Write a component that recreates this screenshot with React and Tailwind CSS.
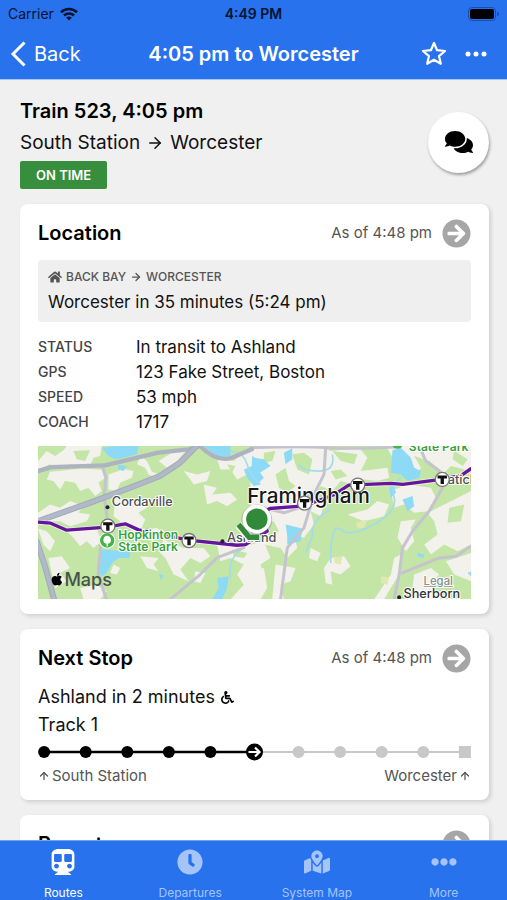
import React from "react";
import {
  FaEllipsisH,
  FaComments,
  FaHome,
  FaArrowCircleRight,
  FaWheelchair,
  FaSubway,
  FaClock,
  FaMapMarkedAlt,
  FaApple,
} from "react-icons/fa";
import { ArrowRight, ArrowUp } from "lucide-react";

function StatusBar() {
  return (
    <div className="grid h-7 grid-cols-3 items-center px-2 text-sm leading-4 text-[#071330]">
      <div className="flex items-center gap-1.5">
        <span>Carrier</span>
        <svg width="18" height="14" viewBox="0 0 18 14" fill="none" stroke="currentColor" strokeWidth="2.600" aria-hidden="true">
          <path d="M1 5.200a11.500 11.500 0 0 1 16 0M4 8.500a7.200 7.200 0 0 1 10 0" />
          <path d="M9 13.500 6.200 10.800a4 4 0 0 1 5.600 0z" fill="currentColor" stroke="none" />
        </svg>
      </div>
      <div className="text-center font-semibold">4:49 PM</div>
      <div className="flex items-center justify-end gap-px">
        <span className="flex h-3.5 w-7 rounded-sm border border-[#1b4fae] p-px">
          <span className="flex-1 rounded-xs bg-black" />
        </span>
        <span className="h-1 w-0.5 rounded-r bg-[#1b4fae]" />
      </div>
    </div>
  );
}

function NavBar() {
  return (
    <nav className="grid h-[52px] grid-cols-[1fr_auto_1fr] items-center border-b border-[#a9c6fa] px-2.5 text-white">
      <button type="button" className="flex items-center gap-2 text-xl">
        <svg width="16" height="26" viewBox="0 0 16 26" fill="none" stroke="currentColor" strokeWidth="3" aria-hidden="true">
          <path d="M14.500 1.500 3 13l11.500 11.500" />
        </svg>
        Back
      </button>
      <h1 className="text-xl font-semibold">4:05 pm to Worcester</h1>
      <div className="flex items-center justify-end gap-[18px] pr-2.5">
        <button type="button" aria-label="Favorite">
          <svg width="26" height="26" viewBox="0 0 26 26" fill="none" stroke="currentColor" strokeWidth="2.200" strokeLinejoin="round" aria-hidden="true">
            <path d="M13 2l3.100 7.200 7.900.8-6 5.100 1.800 7.700-6.800-4-6.800 4L8 15.100 2 10l7.900-.8z" />
          </svg>
        </button>
        <button type="button" aria-label="More options">
          <svg width="22" height="6" viewBox="0 0 22 6" fill="currentColor" aria-hidden="true">
            <circle cx="3" cy="3" r="2.500" />
            <circle cx="11" cy="3" r="2.500" />
            <circle cx="19" cy="3" r="2.500" />
          </svg>
        </button>
      </div>
    </nav>
  );
}

function Card({ title, asOf, children }) {
  return (
    <section className="rounded-lg bg-white px-[18px] pt-[15px] pb-[15px] shadow-[2px_2px_4px_rgba(0,0,0,0.14)]">
      <header className="flex h-7 items-center justify-between">
        <h2 className="text-xl font-semibold text-black">{title}</h2>
        <div className="flex items-center gap-2.5 text-[15px] text-[#555]">
          {asOf && <span>{asOf}</span>}
          <button type="button" aria-label={`Open ${title}`} className="text-[#a6a6a6]">
            <FaArrowCircleRight size={29} />
          </button>
        </div>
      </header>
      {children}
    </section>
  );
}

const LAND = [
  "24,60 50,30 75,45 100,28 110,15 215,15 210,45 190,50 180,75 120,70 80,85 60,70 24,85",
  "60,92 100,88 150,82 215,86 225,110 205,125 215,150 195,165 175,140 150,150 135,125 105,120 90,145 70,120 50,115",
  "235,100 280,84 310,90 305,110 270,125 260,150 235,145",
  "330,45 350,60 365,92 400,105 385,112 355,100 345,80 320,70",
  "385,60 425,35 470,25 440,60 410,80",
  "24,215 60,190 90,200 120,180 160,195 145,215 180,220 170,240 120,255 90,240 24,240",
  "110,270 200,265 215,300 190,320 170,300 150,315 130,290",
  "24,262 50,270 75,300 60,330 40,310",
  "55,350 95,345 120,380 90,395 110,420 75,440",
  "255,170 300,180 330,170 350,200 325,215 345,235 330,270 380,260 400,280 370,300 330,290 290,255 250,225",
  "460,90 500,100 540,90 530,120 490,130 480,115",
  "520,130 560,140 545,160 600,155 620,175 590,195 560,180 530,190",
  "560,55 610,60 640,35 690,30 690,115 650,100 620,115 600,85 570,85",
  "400,295 460,320 520,320 540,345 510,365 480,350 450,385 475,420 430,400 405,350 385,330",
  "495,390 525,395 510,425 490,420",
  "560,310 640,315 700,300 720,350 690,370 700,400 680,430 665,474 600,474 640,430 620,400 640,370 600,350 570,360",
  "330,345 385,350 370,370 385,390 350,380",
  "250,370 270,380 260,400 240,395",
  "150,440 200,430 230,450 210,474 160,474",
  "660,15 870,15 900,30 985,20 1010,50 990,90 1070,80 1075,110 1040,120 1000,115 970,130 930,120 905,150 870,135 850,165 880,190 870,225 840,210 850,250 820,290 790,280 800,320 770,350 750,320 700,310 680,270 660,260",
  "1065,15 1320,15 1320,90 1260,75 1240,95 1195,60 1150,45 1170,80 1150,110 1110,90",
  "1080,150 1130,130 1200,140 1215,170 1190,210 1150,215 1120,190 1090,200",
  "1190,215 1240,190 1320,150 1320,310 1280,330 1240,310 1200,340 1180,310 1220,280 1210,240",
  "1110,240 1155,235 1140,260 1150,300 1125,330 1100,290",
  "950,220 1010,205 1040,180 1075,190 1060,225 1000,240",
  "840,320 870,335 860,360 835,350",
  "900,350 940,345 960,375 930,400 900,390 905,430 885,425 880,380",
  "735,370 795,380 780,420 750,430 760,474 725,474",
  "660,390 700,380 710,440 690,474 660,474",
  "1090,350 1110,340 1105,400 1080,440 1060,474 1030,474 1080,400",
  "1150,400 1200,380 1225,400 1200,425 1230,474 1140,474",
  "1245,360 1320,335 1320,420 1270,400",
];

const GREENS = [
  "735,100 765,80 775,120 795,135 770,155 745,140",
  "785,40 820,35 845,55 835,100 800,85",
  "700,35 735,30 725,60 700,65",
  "905,30 980,40 970,70 930,60",
  "900,90 930,85 950,105 915,115",
  "690,245 730,240 745,270 715,285",
  "1200,75 1230,90 1215,105",
  "1270,30 1310,55 1295,75 1265,55",
  "1255,200 1300,190 1290,240 1250,245",
  "605,325 650,335 640,350 610,345",
  "130,30 180,28 165,60 140,55",
  "590,70 615,75 605,95",
];

const WATER = [
  "215,20 255,15 325,15 320,40 280,50 255,55 235,45",
  "520,15 600,15 600,45 570,48 545,35",
  "262,72 290,75 280,90 265,85",
  "215,325 300,330 298,350 265,350 245,365 230,395 215,405 200,385 205,350",
  "560,410 595,405 590,440 575,474 545,474 565,440",
  "640,85 665,75 680,100 720,75 700,55 670,50 665,110 690,130 670,135 650,110",
  "665,45 690,60 685,90 700,110 680,130 662,110",
  "765,250 815,262 810,300 770,310 770,285",
  "760,35 785,22 785,55 765,70",
  "825,165 845,145 850,185 835,205",
  "1085,28 1110,20 1140,50 1150,80 1170,90 1165,110 1130,120 1110,100 1080,95",
  "1115,175 1145,165 1150,195 1130,210",
  "1075,140 1090,130 1095,155 1080,170",
  "1160,335 1180,340 1178,350 1160,345",
  "385,398 400,402 392,415",
  "1310,395 1320,390 1320,405",
];

const HAZE = [
  "975,245 1010,235 1000,260 980,262",
  "1050,405 1075,408 1070,430 1050,425",
  "910,350 935,345 930,370 912,365",
];

const SHAPES = (list, fill) => list.map((points) => <polygon key={points} points={points} fill={fill} />);

const STATIONS = [
  [233, 255],
  [476, 298],
  [822, 186],
  [981, 132],
  [1234, 115],
];

function RouteMap() {
  const halo = { stroke: "#fff", strokeWidth: 6, strokeLinejoin: "round", paintOrder: "stroke" };
  return (
    <svg viewBox="24 15 1296 459" className="mt-3 block h-auto w-full" role="img" aria-label="Train location map">
      <rect x="24" y="15" width="1296" height="459" fill="#c3e5a5" />
      {SHAPES(LAND, "#f3f1eb")}
      {SHAPES(GREENS, "#c3e5a5")}
      {SHAPES(HAZE, "#dde9ad")}
      {SHAPES(WATER, "#8ddaf6")}
      <g fill="none" stroke="#a2dcec" strokeWidth="5">
        <path d="M600 30q40 5 50 40t40 60M1110 110q-30 20-20 60t-60 80-100 15-30 100M905 40q10 50-40 50t-60-20M900 205q-60 30-55 80l-20 50M640 320q-50 30-40 90" />
      </g>
      <g fill="none" strokeLinejoin="round" strokeLinecap="round">
        <g stroke="#c4c3ce" strokeWidth="9">
          <path d="M215 70l12 40-5 60 12 80-22 60-8 90 25 74" />
          <path d="M885 20l-5 80-30 60-30 100-50 60-20 154" />
          <path d="M420 474l90-75 50-50 80-30" />
          <path d="M660 20q160-5 230 0t200-2" />
          <path d="M1165 15l20 45 40 30 10 50-40 70-50 60-30 50-10 80-15 74M1115 395l110-45 50-5 45-30M700 200l60 15 60-20 30-30" />
        </g>
        <path d="M24 90l40-12 160-5 160-38 90-10 35-10q50 50 95 35l60-25" stroke="#aeb3c0" strokeWidth="13" />
        <path d="M24 240l155-55 120-45 90-35 60-40 55-55M20 300l25 75 30 110" stroke="#a2abb9" strokeWidth="18" />
        <path d="M24 240l155-55 120-45 90-35 60-40 55-55M20 300l25 75 30 110" stroke="#b1b8c7" strokeWidth="12" />
        <path
          d="M24 243l38 3 48 21 120-9 55-10 40 18 150 31 145 15 25-2 65-40-22-50 30-18 104-8 90-34 42-28 127-5 35 3 115-15 60-12 29-20"
          stroke="#fff"
          strokeOpacity="0.600"
          strokeWidth="15"
        />
        <path
          d="M24 243l38 3 48 21 120-9 55-10 40 18 150 31 145 15 25-2 65-40-22-50 30-18 104-8 90-34 42-28 127-5 35 3 115-15 60-12 29-20"
          stroke="#65169b"
          strokeWidth="10"
        />
      </g>
      <g className="font-medium" fill="#4d4f51" style={halo}>
        <text x="245" y="196" fontSize="38">Cordaville</text>
        <text x="590" y="301" fontSize="38">Ashland</text>
        <text x="1222" y="130" fontSize="38">Natick</text>
        <text x="1118" y="470" fontSize="38" fill="#303234">Sherborn</text>
        <g fill="#35a23a" className="font-semibold">
          <text x="264" y="292" fontSize="36">Hopkinton</text>
          <text x="264" y="328" fontSize="36">State Park</text>
          <text x="1134" y="29" fontSize="36">State Park</text>
        </g>
        <text x="650" y="186" fontSize="62" fill="#17191b">Framingham</text>
        <text x="1178" y="430" fontSize="34" fill="#87908a" textDecoration="underline">Legal</text>
      </g>
      <g fill="#222">
        <circle cx="232" cy="198" r="6" />
        <circle cx="576" cy="300" r="6" />
        <circle cx="1105" cy="468" r="6" />
      </g>
      <circle cx="231" cy="298" r="23" fill="#43b649" stroke="#fff" strokeWidth="3" />
      <path d="M231 284a12 12 0 0 1 4 23h-2v9h-4v-9h-2a12 12 0 0 1 4-23z" fill="#fff" />
      <ellipse cx="1100" cy="16" rx="13" ry="7" fill="#43b649" />
      {STATIONS.map(([x, y]) => (
        <g key={x} transform={`translate(${x} ${y})`}>
          <circle r="21" fill="#fff" stroke="#777" strokeWidth="4" />
          <path d="M-14-12h28v9H5v17h-10v-17h-9z" fill="#111" />
        </g>
      ))}
      <path d="M624 250l32 38h32" fill="none" stroke="#fff" strokeWidth="24" />
      <path d="M624 250l32 38h30" fill="none" stroke="#32893a" strokeWidth="16" />
      <circle cx="679" cy="236" r="46" fill="#5c6b5c" opacity="0.350" />
      <circle cx="679" cy="234" r="43" fill="#fff" />
      <circle cx="679" cy="234" r="32" fill="#31893a" />
      <g fill="#47534b">
        <g transform="translate(59 392)">
          <FaApple size={43} />
        </g>
        <text x="103" y="434" fontSize="54" className="font-medium">Maps</text>
      </g>
    </svg>
  );
}

const DETAILS = [
  ["STATUS", "In transit to Ashland"],
  ["GPS", "123 Fake Street, Boston"],
  ["SPEED", "53 mph"],
  ["COACH", "1717"],
];

function LocationCard() {
  return (
    <Card title="Location" asOf="As of 4:48 pm">
      <div className="mt-[13px] h-[62px] rounded bg-[#efefef] px-2.5 pt-2">
        <p className="flex items-center gap-1 text-xs leading-[18px] font-medium text-[#555]">
          <FaHome size={14} />
          BACK BAY
          <ArrowRight size={12} strokeWidth={2.5} />
          WORCESTER
        </p>
        <p className="mt-1 text-[17px] leading-6 text-[#111]">Worcester in 35 minutes (5:24 pm)</p>
      </div>
      <dl className="mt-[13px] grid grid-cols-[98px_1fr] gap-y-px text-[#111]">
        {DETAILS.map(([label, value]) => (
          <React.Fragment key={label}>
            <dt className="text-sm leading-6 font-medium text-[#444]">{label}</dt>
            <dd className="text-[17px] leading-6">{value}</dd>
          </React.Fragment>
        ))}
      </dl>
      <RouteMap />
    </Card>
  );
}

const STOPS = [0, 1, 2, 3, 4, 5, 6, 7, 8, 9, 10];
const CURRENT = 5;

function stopX(i) {
  return i < CURRENT ? 6 + i * 41.5 : i === CURRENT ? 216 : 260 + (i - 6) * 41.5;
}

function Progress() {
  return (
    <svg viewBox="0 0 432 18" className="mt-1 block h-auto w-full" role="img" aria-label="Stop 6 of 11">
      <path d="M6 9h210" stroke="#000" strokeWidth="2.500" />
      <path d="M216 9h210" stroke="#c8c8c8" strokeWidth="2" />
      {STOPS.map((i) =>
        i === 10 ? (
          <rect key={i} x="420" y="3" width="12" height="12" fill="#c8c8c8" />
        ) : (
          <circle key={i} cx={stopX(i)} cy="9" r={i === CURRENT ? 8.5 : 6} fill={i <= CURRENT ? "#000" : "#c8c8c8"} />
        )
      )}
      <path d="M210 9h11M216.500 4.500 221 9l-4.500 4.500" fill="none" stroke="#fff" strokeWidth="2.200" />
    </svg>
  );
}

function NextStopCard() {
  return (
    <Card title="Next Stop" asOf="As of 4:48 pm">
      <div className="mt-[11px] text-lg leading-7 text-[#111]">
        <p className="flex items-center gap-1.5">
          Ashland in 2 minutes <FaWheelchair size={13} className="text-black" />
        </p>
        <p>Track 1</p>
      </div>
      <Progress />
      <div className="mt-1.5 flex justify-between text-[15px] leading-[18px] text-[#555]">
        <span className="flex items-center gap-0.5">
          <ArrowUp size={12} strokeWidth={2.5} />
          South Station
        </span>
        <span className="flex items-center gap-0.5">
          Worcester
          <ArrowUp size={12} strokeWidth={2.5} />
        </span>
      </div>
    </Card>
  );
}

const TABS = [
  ["Routes", FaSubway],
  ["Departures", FaClock],
  ["System Map", FaMapMarkedAlt],
  ["More", FaEllipsisH],
];

function TabBar() {
  return (
    <nav className="grid h-[60px] shrink-0 grid-cols-4 border-t border-[#6ea0f5] bg-[#2872ee]">
      {TABS.map(([label, Icon], i) => (
        <button
          key={label}
          type="button"
          className={`flex flex-col items-center justify-start gap-2.5 pt-2 text-xs leading-4 ${i === 0 ? "text-white" : "text-[#a5c4fa]"}`}
        >
          <Icon size={26} className="shrink-0" />
          {label}
        </button>
      ))}
    </nav>
  );
}

export default function App() {
  return (
    <div className="flex h-screen flex-col overflow-hidden bg-[#f0f0f0] font-['Inter',sans-serif]">
      <div className="shrink-0 bg-[#2872ee]">
        <StatusBar />
        <NavBar />
      </div>
      <main className="min-h-0 flex-1 overflow-y-auto pt-[15px] pr-[18px] pl-5 [scrollbar-width:none]">
        <div className="flex items-center justify-between">
          <div>
            <h2 className="text-xl leading-8 font-semibold text-black">Train 523, 4:05 pm</h2>
            <p className="flex items-center gap-1.5 text-[19px] leading-8 text-[#111]">
              South Station
              <ArrowRight size={18} strokeWidth={2} />
              Worcester
            </p>
            <span className="mt-0.5 block w-fit rounded-xs bg-[#378e3c] px-4 text-[13px] leading-7 font-semibold text-white">
              ON TIME
            </span>
          </div>
          <button
            type="button"
            aria-label="Comments"
            className="flex size-[61px] items-center justify-center rounded-full bg-white text-black shadow-[1px_2px_3px_rgba(0,0,0,0.35)]"
          >
            <FaComments size={28} />
          </button>
        </div>
        <div className="mt-[15px] flex flex-col gap-[15px] pb-4">
          <LocationCard />
          <NextStopCard />
          <Card title="Reports" />
        </div>
      </main>
      <TabBar />
    </div>
  );
}
